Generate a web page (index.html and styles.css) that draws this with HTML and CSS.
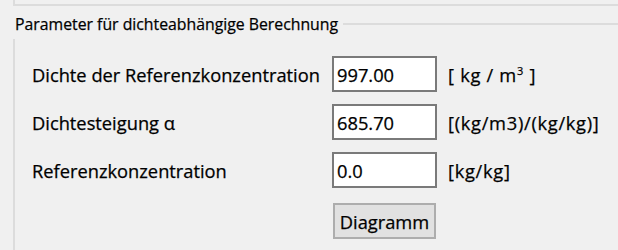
FILE: index.html
```html
<!DOCTYPE html>
<html lang="de">
<head>
    <meta charset="UTF-8">
    <title>Parameter</title>
    <link rel="stylesheet" href="styles.css">
</head>
<body>

    <!-- bottom edge of the panel above -->
    <div class="top-panel"></div>

    <!-- group box -->
    <div class="group">
        <div class="group-title">
            <span>Parameter für dichteabhängige Berechnung</span>
            <div class="title-line"></div>
        </div>
        <div class="group-body">
            <label class="param-label">Dichte der Referenzkonzentration</label>
            <input class="param-input" type="text" value="997.00">
            <span class="param-unit">[ kg / m<sup>3</sup> ]</span>

            <label class="param-label">Dichtesteigung α</label>
            <input class="param-input" type="text" value="685.70">
            <span class="param-unit">[(kg/m3)/(kg/kg)]</span>

            <label class="param-label">Referenzkonzentration</label>
            <input class="param-input" type="text" value="0.0">
            <span class="param-unit">[kg/kg]</span>

            <span></span>
            <button class="diagram-btn">Diagramm</button>
            <span></span>
        </div>
    </div>

</body>
</html>
```

FILE: styles.css
```css
body {
    margin: 0;
    background-color: #f0f0f0;
    font-family: "Open Sans", "Noto Sans", sans-serif;
    font-size: 18.3px;
    color: #000;
    -webkit-text-stroke: 0.25px #000;
    overflow: hidden;
}

.top-panel {
    height: 4px;
    margin-left: 13px;
    border-left: 2px solid #dcdcdc;
    border-bottom: 2px solid #dcdcdc;
}

.group {
    margin-left: 13px;
}

.group-title {
    display: flex;
    align-items: center;
    height: 30px;
    margin-top: 3px;
    padding-left: 2px;
    font-size: 15.8px;
}

.group-title span {
    white-space: nowrap;
}

.title-line {
    flex: 1;
    height: 2px;
    margin-left: 5px;
    background-color: #dcdcdc;
}

.group-body {
    box-sizing: border-box;
    display: grid;
    grid-template-columns: 289px 105px auto;
    grid-auto-rows: 36px;
    column-gap: 11px;
    row-gap: 12px;
    align-items: center;
    align-content: start;
    height: 211px;
    border-left: 2px solid #dcdcdc;
    padding: 17px 0 0 17px;
}

.param-label {
    white-space: nowrap;
}

.param-input {
    box-sizing: border-box;
    width: 105px;
    height: 36px;
    margin: 0;
    padding: 0 3px;
    border: 2px solid #7a7a7a;
    background-color: #fff;
    font-family: inherit;
    font-size: 18.3px;
    color: #000;
}

.param-unit {
    white-space: nowrap;
    letter-spacing: 0.7px;
}

.param-unit sup {
    font-size: 11px;
    vertical-align: 7px;
}

.diagram-btn {
    box-sizing: border-box;
    align-self: start;
    width: 103px;
    height: 36px;
    margin: 3px 0 0 1px;
    padding: 0;
    border: 2px solid #adadad;
    background-color: #e1e1e1;
    font-family: inherit;
    font-size: 18.3px;
    color: #000;
}
```
